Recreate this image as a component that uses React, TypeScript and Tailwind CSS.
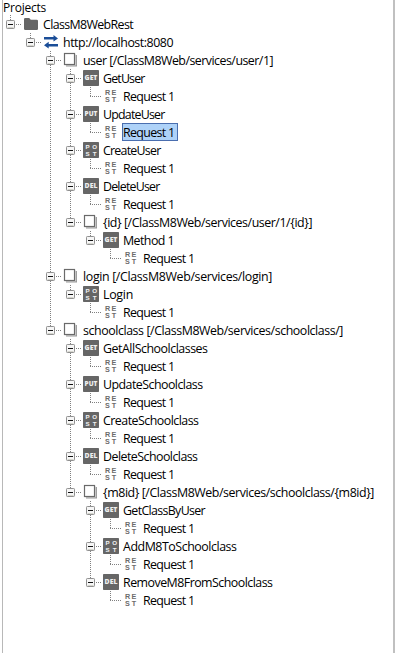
import { useLayoutEffect, useRef } from 'react';

type IconKind = 'folder' | 'host' | 'resource' | 'GET' | 'PUT' | 'DEL' | 'POST' | 'REST';

interface TreeNode {
  label: string;
  icon: IconKind;
  width: number;
  selected?: boolean;
  children?: TreeNode[];
}

const request = (selected = false): TreeNode => ({ label: 'Request 1', icon: 'REST', width: 51.5, selected });

const method = (icon: IconKind, label: string, width: number, selected = false): TreeNode => ({
  label,
  icon,
  width,
  children: [request(selected)],
});

const root: TreeNode = {
  label: 'ClassM8WebRest',
  icon: 'folder',
  width: 90,
  children: [
    {
      label: 'http://localhost:8080',
      icon: 'host',
      width: 110,
      children: [
        {
          label: 'user [/ClassM8Web/services/user/1]',
          icon: 'resource',
          width: 190,
          children: [
            method('GET', 'GetUser', 41.5),
            method('PUT', 'UpdateUser', 61.5, true),
            method('POST', 'CreateUser', 57.5),
            method('DEL', 'DeleteUser', 56.5),
            {
              label: '{id} [/ClassM8Web/services/user/1/{id}]',
              icon: 'resource',
              width: 209,
              children: [method('GET', 'Method 1', 51)],
            },
          ],
        },
        {
          label: 'login [/ClassM8Web/services/login]',
          icon: 'resource',
          width: 189,
          children: [method('POST', 'Login', 30)],
        },
        {
          label: 'schoolclass [/ClassM8Web/services/schoolclass/]',
          icon: 'resource',
          width: 260,
          children: [
            method('GET', 'GetAllSchoolclasses', 104.5),
            method('PUT', 'UpdateSchoolclass', 99.5),
            method('POST', 'CreateSchoolclass', 95.5),
            method('DEL', 'DeleteSchoolclass', 94.5),
            {
              label: '{m8id} [/ClassM8Web/services/schoolclass/{m8id}]',
              icon: 'resource',
              width: 271,
              children: [
                method('GET', 'GetClassByUser', 82),
                method('POST', 'AddM8ToSchoolclass', 113.5),
                method('DEL', 'RemoveM8FromSchoolclass', 149.5),
              ],
            },
          ],
        },
      ],
    },
  ],
};

/** Text tracked so that it fills the given advance width. */
function FitText({ text, width }: { text: string; width: number }) {
  const ref = useRef<HTMLSpanElement>(null);
  useLayoutEffect(() => {
    const el = ref.current;
    if (!el) return;
    el.style.letterSpacing = '0px';
    const natural = el.getBoundingClientRect().width;
    el.style.letterSpacing = `${(width - natural) / text.length}px`;
  }, [text, width]);
  return (
    <span ref={ref} className="whitespace-pre">
      {text}
    </span>
  );
}

function NodeIcon({ kind }: { kind: IconKind }) {
  return (
    <svg width="16" height="16" viewBox="0 0 16 16" className="block shrink-0">
      {kind === 'folder' && (
        <path d="M1 3.2Q1 2 2.2 2H6.2L7.8 3.8H13.8Q15 3.8 15 5V12.8Q15 14 13.8 14H2.2Q1 14 1 12.8Z" fill="#666" />
      )}
      {kind === 'host' && (
        <path
          d="M1 3H10.5V1L15 4.4L10.5 7.6V5.6H1Z M15 10H5.7V7.8L1 11.3L5.7 14.6V12.6H15Z"
          fill="#1b4e98"
        />
      )}
      {kind === 'resource' && (
        <>
          <path d="M12 3H14V14.4H3V12.5H12Z" fill="#999" />
          <path d="M12.6 2V13.1H2.5" fill="none" stroke="#e4e4e4" strokeWidth="0.8" />
          <rect x="1.5" y="1.5" width="10" height="11" fill="#fff" stroke="#6a6a6a" strokeWidth="1.2" />
        </>
      )}
      {(kind === 'GET' || kind === 'PUT' || kind === 'DEL') && (
        <>
          <rect width="16" height="16" rx="0.7" fill="#666" />
          <text
            x="1.6"
            y="10"
            fontSize="6.1"
            fill="#eee"
            textLength="12.8"
            lengthAdjust="spacingAndGlyphs"
            className="font-['Open_Sans','Noto_Sans',sans-serif] font-extrabold"
          >
            {kind}
          </text>
        </>
      )}
      {kind === 'POST' && (
        <>
          <rect width="16" height="16" rx="0.7" fill="#666" />
          <text fontSize="6.2" fill="#f2f2f2" textAnchor="middle" className="font-['Liberation_Sans',sans-serif] font-bold">
            <tspan x="4.5" y="6.5">P</tspan>
            <tspan x="11.7">O</tspan>
            <tspan x="4.5" y="13.7">S</tspan>
            <tspan x="11.7">T</tspan>
          </text>
        </>
      )}
      {kind === 'REST' && (
        <text fontSize="7.2" fill="#6c6c6c" textAnchor="middle" className="font-['Liberation_Sans',sans-serif] font-bold">
          <tspan x="4.5" y="7">R</tspan>
          <tspan x="10.9">E</tspan>
          <tspan x="4.5" y="14.4">S</tspan>
          <tspan x="10.9">T</tspan>
        </text>
      )}
    </svg>
  );
}

/** One 20px column of the tree's dotted connectors. */
function Guide({ up, down, branch, expander }: { up?: boolean; down?: boolean; branch?: boolean; expander?: boolean }) {
  return (
    <svg width="20" height="18" viewBox="0 0 20 18" className="block shrink-0 overflow-visible" shapeRendering="crispEdges">
      <g stroke="#808080" strokeDasharray="1 1">
        {up && <path d="M10.5 0V9" />}
        {down && <path d="M10.5 10V18" />}
        {branch && <path d="M10 9.5H22" />}
      </g>
      {expander && (
        <g shapeRendering="auto">
          <rect x="6.5" y="5.5" width="8" height="8" rx="0.8" fill="#f6f6f6" stroke="#919191" />
          <path d="M7.5 12.5H13.5" stroke="#d6d6ce" />
          <path d="M8 9.5H13" stroke="#111" />
        </g>
      )}
    </svg>
  );
}

function Branch({ node, trail, last }: { node: TreeNode; trail: boolean[]; last: boolean }) {
  return (
    <li>
      <div className="flex h-[18px] items-start">
        {trail.map((runs, i) => (
          <Guide key={i} up={runs} down={runs} />
        ))}
        <Guide up down={!last} branch expander={Boolean(node.children)} />
        <div className="ml-[3px] mt-px shrink-0">
          <NodeIcon kind={node.icon} />
        </div>
        <div
          className={`ml-[3px] flex h-[18px] shrink-0 border pr-[2px] pt-px leading-[16px] ${
            node.selected ? 'border-[#4a6eaf] bg-[#aed2f8]' : 'border-transparent'
          }`}
        >
          <FitText text={node.label} width={node.width} />
        </div>
      </div>
      {node.children && (
        <ul>
          {node.children.map((child, i) => (
            <Branch key={i} node={child} trail={[...trail, !last]} last={i === node.children!.length - 1} />
          ))}
        </ul>
      )}
    </li>
  );
}

export default function App() {
  return (
    <div className="flex h-[653px] w-[400px] overflow-hidden bg-white font-['Open_Sans','Noto_Sans',sans-serif] text-[12.4px] text-black">
      <div className="relative w-[395px] shrink-0 border-r-2 border-[#c0c0c0]">
        <div className="absolute inset-y-0 left-[2px] w-px bg-[#b8b8b8]" />
        <div className="relative flex h-[15px] pl-[3px] text-[12px] leading-[16px]">
          <FitText text="Projects" width={43} />
        </div>
        <ul className="relative">
          <Branch node={root} trail={[]} last />
        </ul>
      </div>
    </div>
  );
}
